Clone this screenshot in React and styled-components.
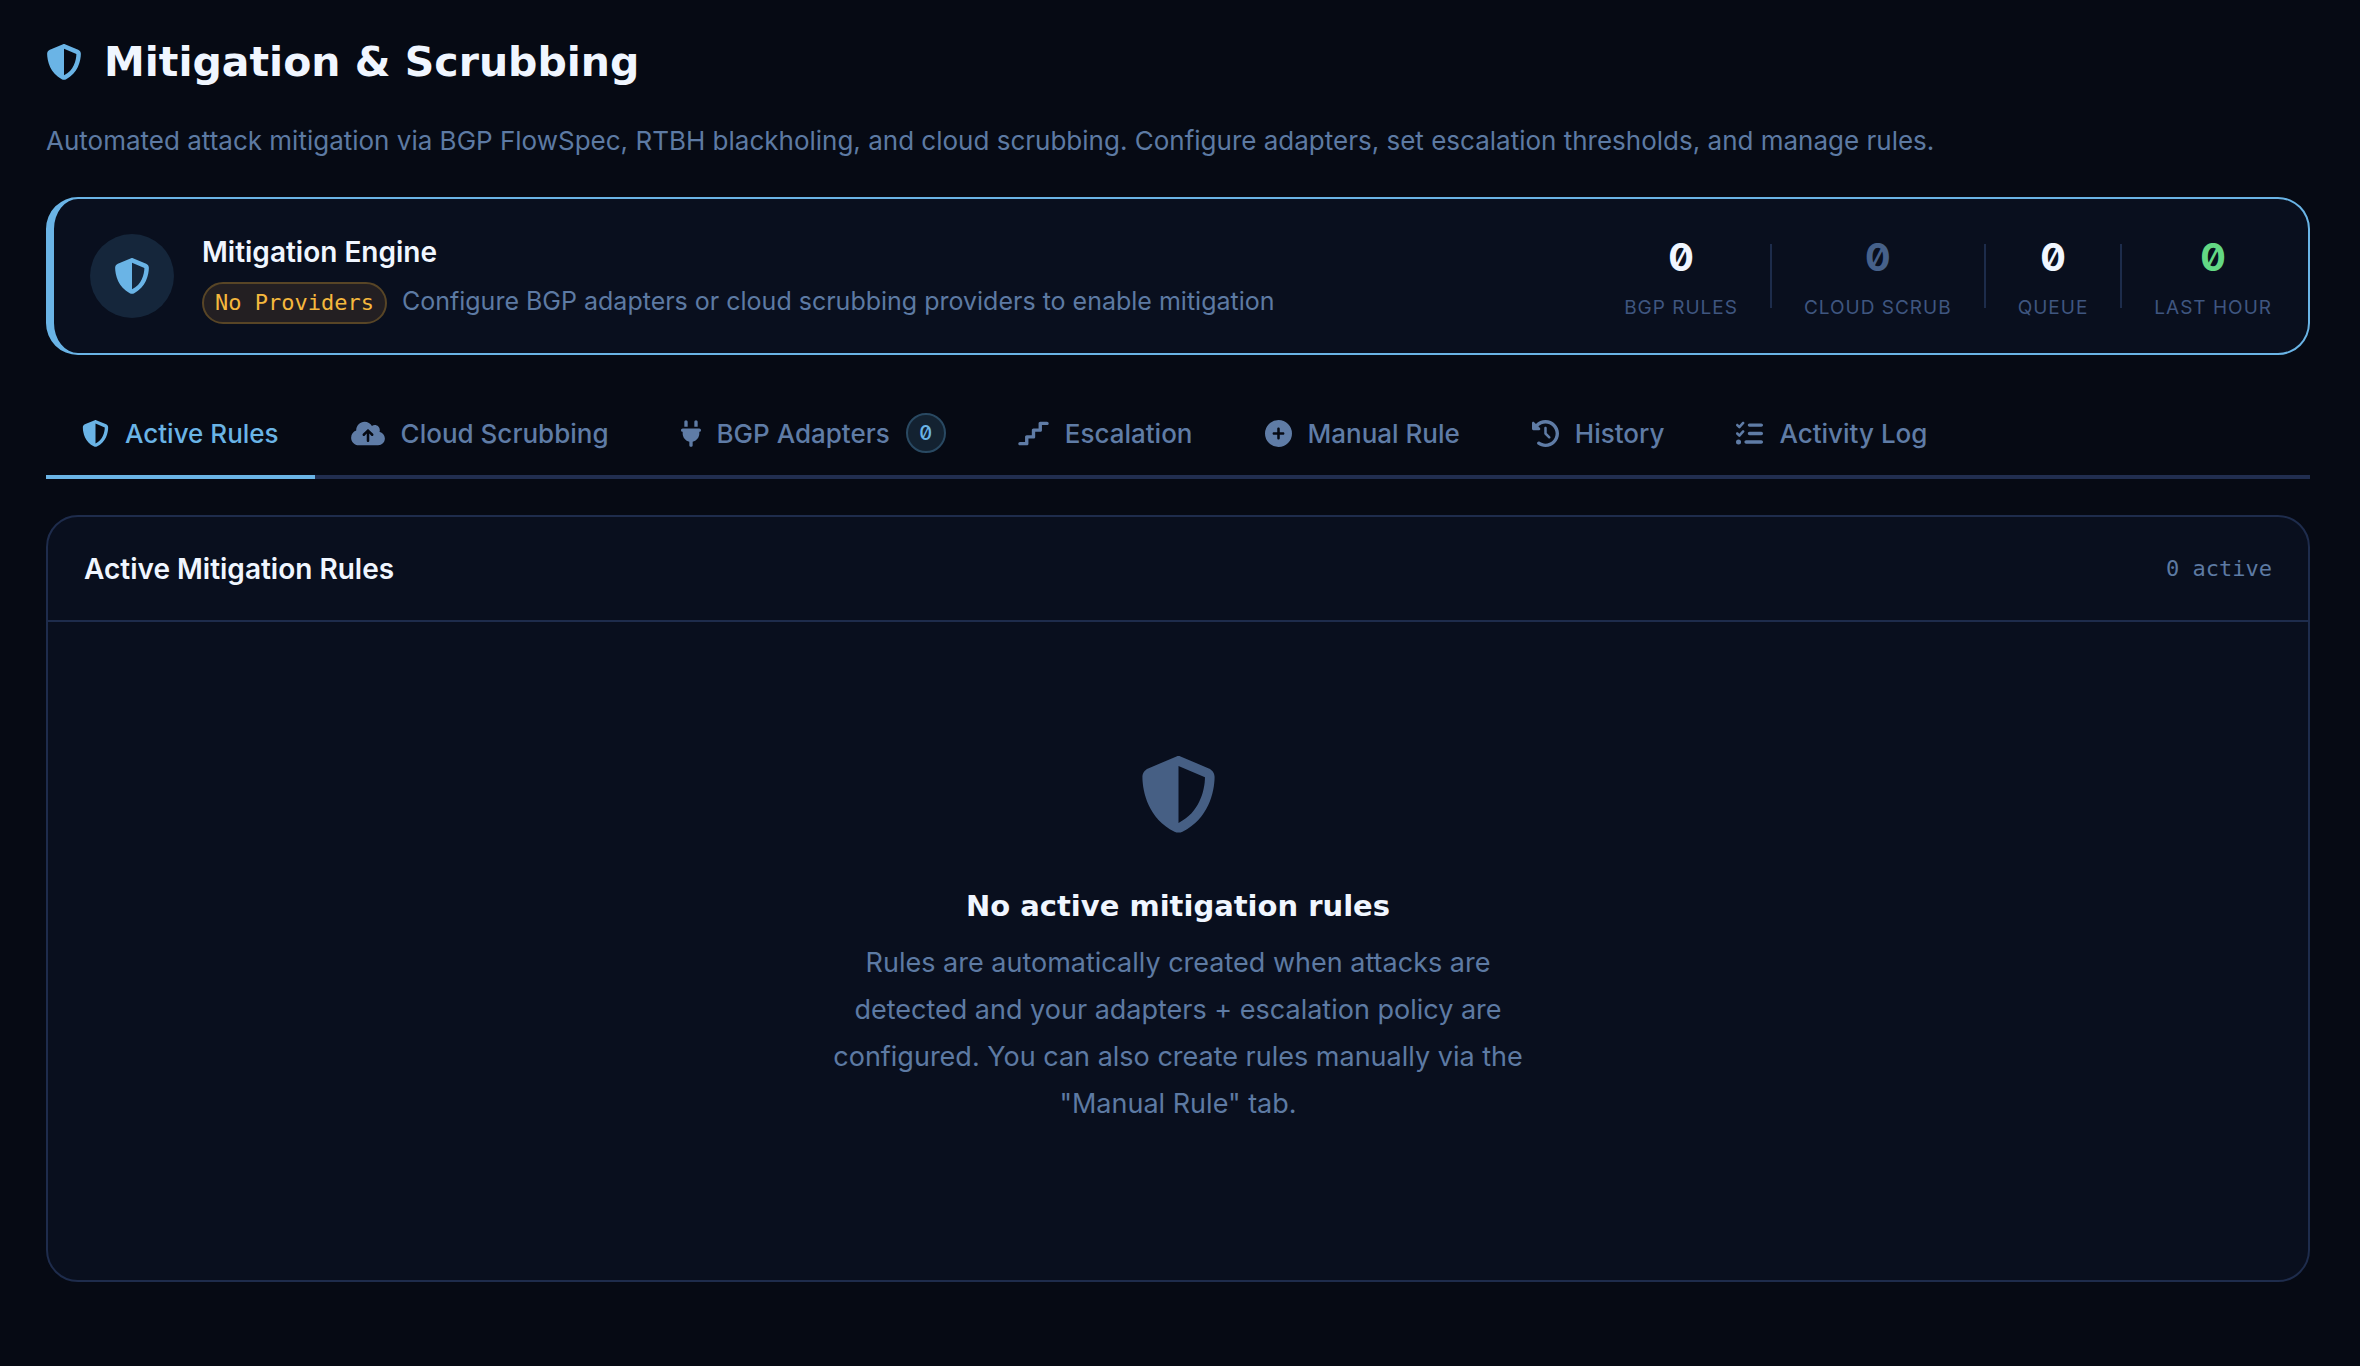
import React, { useState } from "react";
import styled, { createGlobalStyle } from "styled-components";
import {
  FaCirclePlus,
  FaClockRotateLeft,
  FaCloudArrowUp,
  FaListCheck,
  FaPlug,
  FaShieldHalved,
  FaStairs,
} from "react-icons/fa6";

const GlobalStyle = createGlobalStyle`
  * {
    box-sizing: border-box;
  }
  body {
    margin: 0;
    min-height: 100vh;
    background: #060a14;
    color: #f0f6ff;
    font-family: Inter, "Liberation Sans", sans-serif;
    font-size: 26px;
  }
  h1, h2, h3, p, dl, dd {
    margin: 0;
  }
`;

const Page = styled.main`
  padding: 36px 50px 86px 46px;
`;

const PageTitle = styled.h1`
  display: flex;
  align-items: center;
  gap: 22px;
  font-family: "DejaVu Sans", sans-serif;
  font-size: 41px;
  font-weight: 700;
  line-height: 52px;
  svg {
    width: 36px;
    height: 36px;
    color: #6ab4e6;
  }
`;

const Intro = styled.p`
  margin-top: 33px;
  color: #5d7aa3;
  line-height: 40px;
`;

const EngineCard = styled.section`
  display: flex;
  align-items: center;
  gap: 28px;
  margin-top: 36px;
  padding: 28px 36px;
  min-height: 158px;
  background: #090f1e;
  border: 2px solid #6ab4e6;
  border-left-width: 8px;
  border-radius: 32px;
`;

const EngineIcon = styled.div`
  display: flex;
  align-items: center;
  justify-content: center;
  flex: none;
  width: 84px;
  height: 84px;
  border-radius: 50%;
  background: #15263b;
  color: #6ab4e6;
  font-size: 36px;
`;

const EngineInfo = styled.div`
  flex: 1;
  padding-top: 4px;
`;

const CardTitle = styled.h2`
  font-size: 28px;
  font-weight: 600;
  line-height: 40px;
`;

const EngineStatus = styled.div`
  display: flex;
  align-items: baseline;
  gap: 15px;
  margin-top: 10px;
  p {
    color: #5d7aa3;
    font-size: 25px;
    line-height: 36px;
  }
`;

const Pill = styled.span`
  padding: 0 11px;
  border: 2px solid #584526;
  border-radius: 21px;
  background: #231f22;
  color: #f5b83d;
  font-family: "DejaVu Sans Mono", monospace;
  font-size: 22px;
  line-height: 38px;
`;

const Stats = styled.dl`
  display: flex;
  align-items: center;
`;

const Stat = styled.div`
  display: flex;
  flex-direction: column-reverse;
  align-items: center;
  gap: 18px;
  padding-top: 2px;
  dt {
    color: #3f5680;
    font-size: 19px;
    line-height: 22px;
    letter-spacing: 1px;
    text-transform: uppercase;
  }
  dd {
    color: ${(props) => props.$color};
    font-size: 38px;
    font-weight: 700;
    font-variant-numeric: slashed-zero;
    line-height: 44px;
  }
`;

const Divider = styled.div`
  width: 2px;
  height: 64px;
  margin: 0 32px;
  background: #1d2c4b;
`;

const Tabs = styled.nav`
  display: flex;
  margin-top: 36px;
  border-bottom: 4px solid #212e50;
`;

const Tab = styled.button`
  display: flex;
  align-items: center;
  gap: 16px;
  height: 88px;
  margin-bottom: -4px;
  padding: 0 36px;
  border: 0;
  border-bottom: 4px solid ${(props) => (props.$active ? "#6ab4e6" : "transparent")};
  background: none;
  color: ${(props) => (props.$active ? "#6ab4e6" : "#5f7ca6")};
  font: inherit;
  font-weight: 500;
  white-space: nowrap;
  cursor: pointer;
  svg {
    flex: none;
    width: ${(props) => props.$iconWidth}px;
    height: 27px;
  }
`;

const Count = styled.span`
  display: flex;
  align-items: center;
  justify-content: center;
  width: 40px;
  height: 40px;
  border: 2px solid #294962;
  border-radius: 50%;
  background: #132231;
  color: #6ab4e6;
  font-size: 20px;
  font-variant-numeric: slashed-zero;
`;

const Panel = styled.section`
  margin-top: 36px;
  background: #090f1e;
  border: 2px solid #1e2c4c;
  border-radius: 32px;
`;

const PanelHeader = styled.header`
  display: flex;
  align-items: center;
  justify-content: space-between;
  height: 105px;
  padding: 0 36px;
  border-bottom: 2px solid #1e2c4c;
  span {
    color: #5d7aa3;
    font-family: "DejaVu Sans Mono", monospace;
    font-size: 22px;
  }
`;

const Empty = styled.div`
  display: flex;
  flex-direction: column;
  align-items: center;
  padding: 134px 36px 153px;
  text-align: center;
  svg {
    width: 77px;
    height: 77px;
    color: #465f84;
  }
  h3 {
    margin-top: 53px;
    font-family: "DejaVu Sans", sans-serif;
    font-size: 29px;
    font-weight: 700;
    line-height: 40px;
  }
  p {
    max-width: 720px;
    margin-top: 13px;
    color: #5d7aa3;
    font-size: 27px;
    line-height: 47px;
  }
`;

const stats = [
  { label: "BGP Rules", value: 0, color: "#f0f6ff" },
  { label: "Cloud Scrub", value: 0, color: "#46618a" },
  { label: "Queue", value: 0, color: "#f0f6ff" },
  { label: "Last Hour", value: 0, color: "#63d884" },
];

const tabs = [
  { label: "Active Rules", icon: FaShieldHalved, iconWidth: 27 },
  { label: "Cloud Scrubbing", icon: FaCloudArrowUp, iconWidth: 34 },
  { label: "BGP Adapters", icon: FaPlug, iconWidth: 20, count: 0 },
  { label: "Escalation", icon: FaStairs, iconWidth: 31 },
  { label: "Manual Rule", icon: FaCirclePlus, iconWidth: 27 },
  { label: "History", icon: FaClockRotateLeft, iconWidth: 27 },
  { label: "Activity Log", icon: FaListCheck, iconWidth: 27 },
];

export default function App() {
  const [active, setActive] = useState("Active Rules");

  return (
    <>
      <GlobalStyle />
      <Page>
        <PageTitle>
          <FaShieldHalved />
          Mitigation &amp; Scrubbing
        </PageTitle>
        <Intro>
          Automated attack mitigation via BGP FlowSpec, RTBH blackholing, and
          cloud scrubbing. Configure adapters, set escalation thresholds, and
          manage rules.
        </Intro>

        <EngineCard>
          <EngineIcon>
            <FaShieldHalved />
          </EngineIcon>
          <EngineInfo>
            <CardTitle>Mitigation Engine</CardTitle>
            <EngineStatus>
              <Pill>No Providers</Pill>
              <p>
                Configure BGP adapters or cloud scrubbing providers to enable
                mitigation
              </p>
            </EngineStatus>
          </EngineInfo>
          <Stats>
            {stats.map((item, index) => (
              <React.Fragment key={item.label}>
                {index > 0 && <Divider />}
                <Stat $color={item.color}>
                  <dt>{item.label}</dt>
                  <dd>{item.value}</dd>
                </Stat>
              </React.Fragment>
            ))}
          </Stats>
        </EngineCard>

        <Tabs>
          {tabs.map(({ label, icon: Icon, iconWidth, count }) => (
            <Tab
              key={label}
              type="button"
              $active={label === active}
              $iconWidth={iconWidth}
              onClick={() => setActive(label)}
            >
              <Icon />
              {label}
              {count !== undefined && <Count>{count}</Count>}
            </Tab>
          ))}
        </Tabs>

        <Panel>
          <PanelHeader>
            <CardTitle>Active Mitigation Rules</CardTitle>
            <span>0 active</span>
          </PanelHeader>
          <Empty>
            <FaShieldHalved />
            <h3>No active mitigation rules</h3>
            <p>
              Rules are automatically created when attacks are detected and your
              adapters + escalation policy are configured. You can also create
              rules manually via the "Manual Rule" tab.
            </p>
          </Empty>
        </Panel>
      </Page>
    </>
  );
}
